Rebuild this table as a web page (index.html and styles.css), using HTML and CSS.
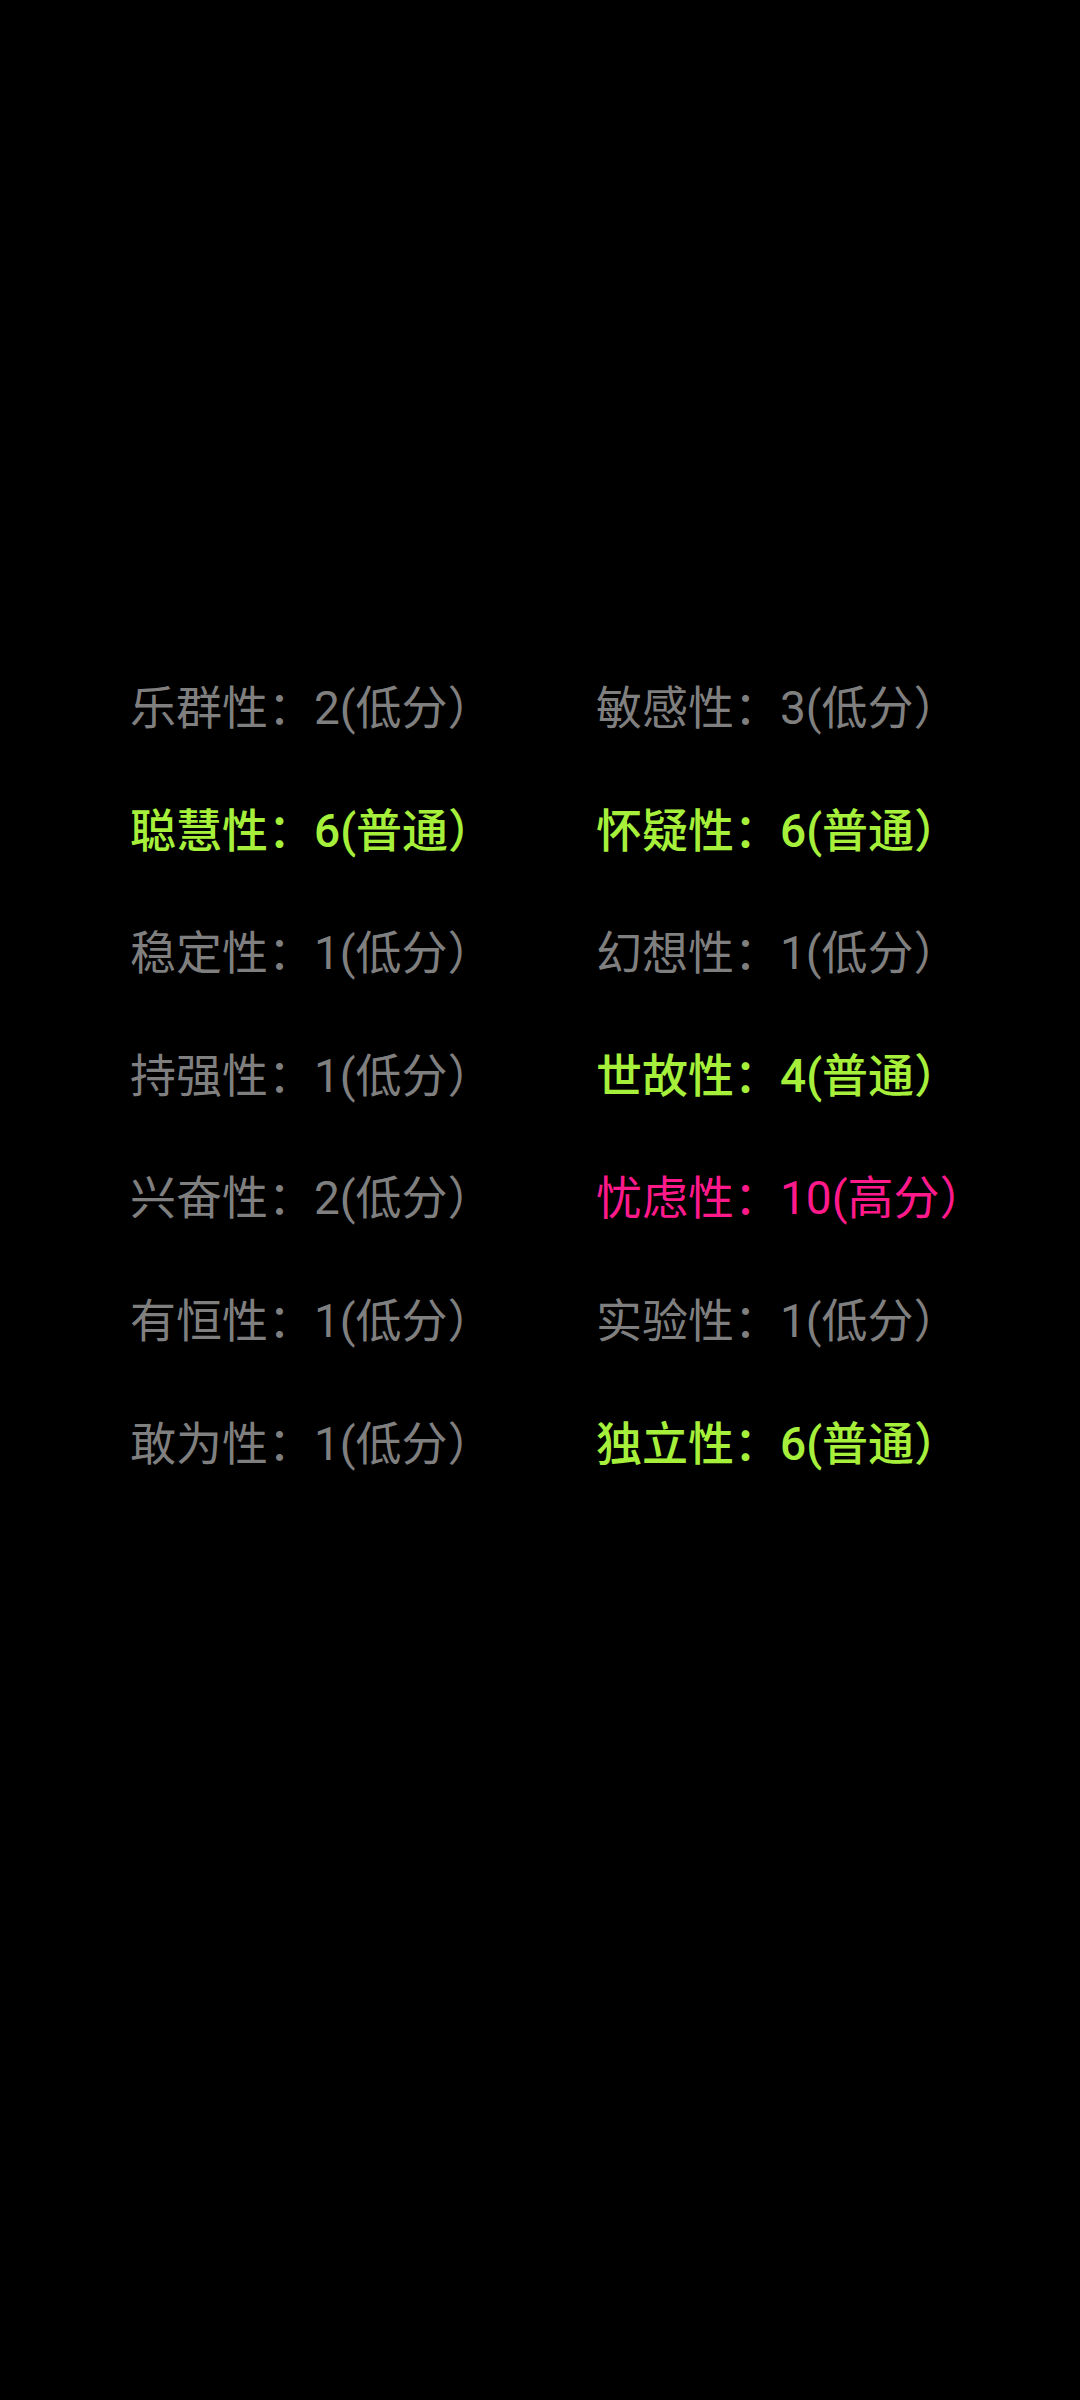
FILE: index.html
```html
<!DOCTYPE html>
<html lang="zh-CN">
<head>
<meta charset="utf-8">
<link rel="stylesheet" href="styles.css">
</head>
<body>
<div class="grid">
  <div class="item low">乐群性：2(低分）</div>
  <div class="item low">敏感性：3(低分）</div>
  <div class="item mid">聪慧性：6(普通）</div>
  <div class="item mid">怀疑性：6(普通）</div>
  <div class="item low">稳定性：1(低分）</div>
  <div class="item low">幻想性：1(低分）</div>
  <div class="item low">持强性：1(低分）</div>
  <div class="item mid">世故性：4(普通）</div>
  <div class="item low">兴奋性：2(低分）</div>
  <div class="item high">忧虑性：10(高分）</div>
  <div class="item low">有恒性：1(低分）</div>
  <div class="item low">实验性：1(低分）</div>
  <div class="item low">敢为性：1(低分）</div>
  <div class="item mid">独立性：6(普通）</div>
</div>
</body>
</html>
```
FILE: styles.css
```css
html, body {
  margin: 0;
  padding: 0;
  background: #000;
  width: 1080px;
  height: 2400px;
}
body {
  font-family: Roboto, "Noto Sans CJK SC", sans-serif;
}
.grid {
  display: grid;
  grid-template-columns: 466px 400px;
  grid-auto-rows: 122.6px;
  padding: 677px 0 0 130px;
}
.item {
  font-size: 46px;
  line-height: 62px;
  white-space: nowrap;
}
.low { color: #7f7f7f; }
.mid { color: #a6f03c; font-weight: 500; }
.high { color: #ff1a8c; }
```
